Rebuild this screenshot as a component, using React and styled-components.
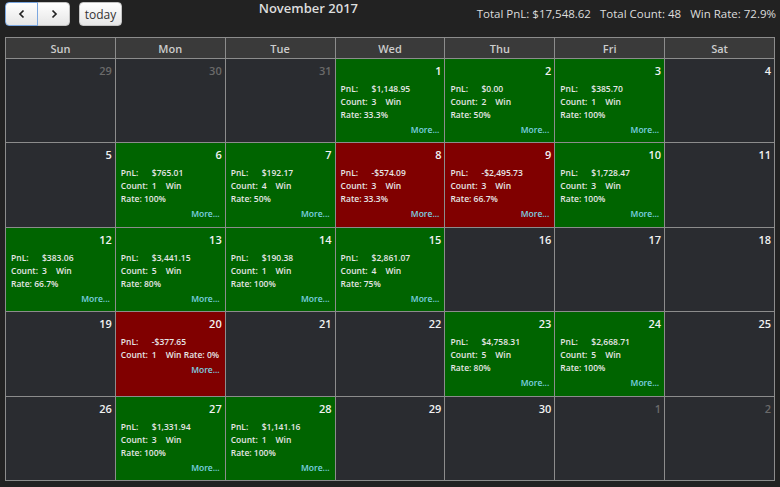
import React from 'react';
import styled, { createGlobalStyle } from 'styled-components';

const GlobalStyle = createGlobalStyle`
  html, body {
    margin: 0;
    padding: 0;
    background: #222222;
  }
  body {
    font-family: 'Open Sans', 'Noto Sans', sans-serif;
    color: #dddddd;
  }
`

// trades per day, keyed by day of month
const stats = {
  1: { pnl: '$1,148.95', count: 3, rate: '33.3%' },
  2: { pnl: '$0.00', count: 2, rate: '50%' },
  3: { pnl: '$385.70', count: 1, rate: '100%' },
  6: { pnl: '$765.01', count: 1, rate: '100%' },
  7: { pnl: '$192.17', count: 4, rate: '50%' },
  8: { pnl: '-$574.09', count: 3, rate: '33.3%', loss: true },
  9: { pnl: '-$2,495.73', count: 3, rate: '66.7%', loss: true },
  10: { pnl: '$1,728.47', count: 3, rate: '100%' },
  12: { pnl: '$383.06', count: 3, rate: '66.7%' },
  13: { pnl: '$3,441.15', count: 5, rate: '80%' },
  14: { pnl: '$190.38', count: 1, rate: '100%' },
  15: { pnl: '$2,861.07', count: 4, rate: '75%' },
  20: { pnl: '-$377.65', count: 1, rate: '0%', loss: true },
  23: { pnl: '$4,758.31', count: 5, rate: '80%' },
  24: { pnl: '$2,668.71', count: 5, rate: '100%' },
  27: { pnl: '$1,331.94', count: 3, rate: '100%' },
  28: { pnl: '$1,141.16', count: 1, rate: '100%' },
}

const days = ['Sun', 'Mon', 'Tue', 'Wed', 'Thu', 'Fri', 'Sat']

const cells = [
  ...[29, 30, 31].map((d) => ({ day: d, other: true })),
  ...Array.from({ length: 30 }, (_, i) => ({ day: i + 1, other: false })),
  ...[1, 2].map((d) => ({ day: d, other: true })),
]

function DayCell({ day, other }) {
  const s = other ? null : stats[day]
  return (
    <Cell $tone={s ? (s.loss ? 'loss' : 'win') : 'none'}>
      <DayNumber $other={other}>{day}</DayNumber>
      {s && (
        <Summary>
          <Line>
            <Label>PnL:</Label>{s.pnl}
          </Line>
          <Line>
            <Label>Count:</Label>{s.count}
            <Win>Win</Win> <NoWrap>Rate: {s.rate}</NoWrap>
          </Line>
          <More href="#">More...</More>
        </Summary>
      )}
    </Cell>
  )
}

export default function App() {
  return (
    <>
      <GlobalStyle />
      <Page>
        <Toolbar>
          <Left>
            <ButtonGroup>
              <NavButton $focus>
                <Chevron viewBox="0 0 10 10"><path d="M6.5 1.5 3 5l3.5 3.5" /></Chevron>
              </NavButton>
              <NavButton>
                <Chevron viewBox="0 0 10 10"><path d="M3.5 1.5 7 5 3.5 8.5" /></Chevron>
              </NavButton>
            </ButtonGroup>
            <TodayButton>today</TodayButton>
          </Left>
          <Title>November 2017</Title>
          <Totals>
            <span>Total PnL: $17,548.62</span>
            <span>Total Count: 48</span>
            <span>Win Rate: 72.9%</span>
          </Totals>
        </Toolbar>
        <Grid>
          {days.map((d) => (
            <HeadCell key={d}>{d}</HeadCell>
          ))}
          {cells.map((c, i) => (
            <DayCell key={i} day={c.day} other={c.other} />
          ))}
        </Grid>
      </Page>
    </>
  )
}

const Page = styled.div`
  width: 780px;
  height: 487px;
  padding: 0 5px;
  box-sizing: border-box;
`
const Toolbar = styled.div`
  display: flex;
  align-items: flex-start;
  height: 37px;
  padding-top: 2px;
  box-sizing: border-box;
`
const Left = styled.div`
  display: flex;
  gap: 9px;
`
const ButtonGroup = styled.div`
  display: flex;
`
const buttonBase = `
  height: 24px;
  box-sizing: border-box;
  background: linear-gradient(#ffffff, #e6e6e6);
  border: 1px solid #c4c4c4;
  color: #333333;
  font-family: 'Open Sans', sans-serif;
  padding: 0;
  display: flex;
  align-items: center;
  justify-content: center;
`
const NavButton = styled.button`
  ${buttonBase}
  width: 33px;
  border-color: ${(p) => (p.$focus ? '#7ba7e0' : '#c4c4c4')};
  border-radius: 0 4px 4px 0;
  &:first-child {
    border-radius: 4px 0 0 4px;
    margin-right: -1px;
    position: relative;
    z-index: 1;
  }
`
const Chevron = styled.svg`
  width: 10px;
  height: 10px;
  fill: none;
  stroke: #222222;
  stroke-width: 1.7;
`
const TodayButton = styled.button`
  ${buttonBase}
  width: 43px;
  border-radius: 4px;
  font-size: 12px;
`
const Title = styled.h2`
  flex: 1;
  margin: -2px 0 0;
  text-align: center;
  font-size: 13px;
  font-weight: 600;
  color: #dddddd;
  padding-left: 18px;
  line-height: 16px;
`
const Totals = styled.div`
  display: flex;
  gap: 9px;
  font-size: 11.5px;
  color: #dddddd;
  padding-top: 4px;
  margin-right: -1px;
`
const Grid = styled.div`
  display: grid;
  grid-template-columns: repeat(7, 1fr);
  grid-template-rows: 20px repeat(5, 83.4px);
  gap: 1px;
  padding: 1px;
  background: #8c8c8c;
`
const HeadCell = styled.div`
  background: #3a3a3a;
  color: #cccccc;
  font-size: 11px;
  font-weight: 600;
  display: flex;
  align-items: center;
  justify-content: center;
`
const tones = { none: '#2a2c30', win: '#006400', loss: '#800000' }
const Cell = styled.div`
  background: ${(p) => tones[p.$tone]};
  display: flex;
  flex-direction: column;
  min-width: 0;
`
const DayNumber = styled.div`
  text-align: right;
  font-size: 11px;
  font-weight: 600;
  line-height: 14px;
  padding: 5px 3px 0 0;
  color: ${(p) => (p.$other ? '#6a6a6a' : '#f2f2f2')};
`
const Summary = styled.div`
  padding: 4px 5px 0 5px;
  font-size: 8.5px;
  font-weight: 600;
  line-height: 13px;
  color: #e6e6e6;
  display: flex;
  flex-direction: column;
`
const Line = styled.div``
const Label = styled.span`
  display: inline-block;
  width: 31px;
`
const Win = styled.span`
  margin-left: 9px;
`
const NoWrap = styled.span`
  white-space: nowrap;
`
const More = styled.a`
  align-self: flex-end;
  margin-top: 2px;
  color: #7dd3e3;
  text-decoration: none;
`
